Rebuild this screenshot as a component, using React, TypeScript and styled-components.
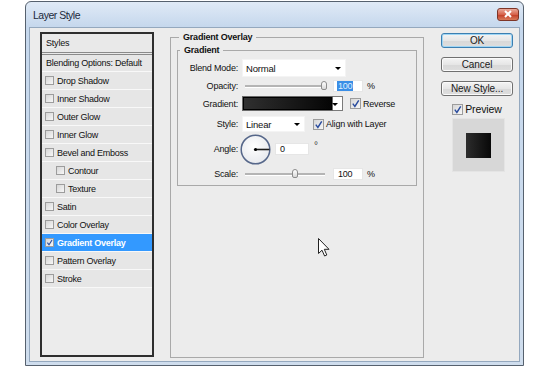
import React from "react";
import styled, { createGlobalStyle } from "styled-components";

interface IStyleItem {
  label: string;
  nested?: boolean;
  checked?: boolean;
  selected?: boolean;
}

const styleItems: IStyleItem[] = [
  { label: "Drop Shadow" },
  { label: "Inner Shadow" },
  { label: "Outer Glow" },
  { label: "Inner Glow" },
  { label: "Bevel and Emboss" },
  { label: "Contour", nested: true },
  { label: "Texture", nested: true },
  { label: "Satin" },
  { label: "Color Overlay" },
  { label: "Gradient Overlay", checked: true, selected: true },
  { label: "Pattern Overlay" },
  { label: "Stroke" },
];

function Check({ checked, size = 9 }: { checked?: boolean; size?: number }) {
  return (
    <Box $size={size}>
      {checked && (
        <svg width={size} height={size} viewBox="0 0 10 10">
          <path d="M2 5.2 L4.3 8.2 L8.6 1.4" fill="none" stroke="#2a4c9e" strokeWidth="1.6" />
        </svg>
      )}
    </Box>
  );
}

function App() {
  return (
    <>
      <GlobalStyle />
      <Window>
        <TitleBar>
          <Title>Layer Style</Title>
          <CloseBtn>
            <svg width="10" height="8" viewBox="0 0 10 8">
              <path d="M2 1 L8 7 M8 1 L2 7" stroke="#fff" strokeWidth="2" />
            </svg>
          </CloseBtn>
        </TitleBar>
        <Body>
          <StylesPanel>
            <PanelHead>Styles</PanelHead>
            <BlendRow>Blending Options: Default</BlendRow>
            {styleItems.map((item) => (
              <StyleRow key={item.label} $nested={item.nested} $selected={item.selected}>
                <Check checked={item.checked} />
                {item.label}
              </StyleRow>
            ))}
          </StylesPanel>

          <Group>
            <Legend>Gradient Overlay</Legend>
            <InnerGroup>
              <Legend>Gradient</Legend>
              <Row $h={18}>
                <Label>Blend Mode:</Label>
                <Select $w={104} $h={18}>
                  Normal
                  <Arrow />
                </Select>
              </Row>
              <Row $h={16} $mt={1}>
                <Label>Opacity:</Label>
                <Slider>
                  <Thumb style={{ left: "79px" }} />
                </Slider>
                <NumInput>
                  <Selected>100</Selected>
                </NumInput>
                <Unit>%</Unit>
              </Row>
              <Row $h={17} $mt={1}>
                <Label>Gradient:</Label>
                <Swatch />
                <SwatchDrop>
                  <Arrow />
                </SwatchDrop>
                <Option $ml={7}>
                  <Check checked size={11} />
                  Reverse
                </Option>
              </Row>
              <Row $h={18} $mt={3}>
                <Label>Style:</Label>
                <Select $w={63} $h={16}>
                  Linear
                  <Arrow />
                </Select>
                <Option $ml={8}>
                  <Check checked size={11} />
                  Align with Layer
                </Option>
              </Row>
              <Row $h={30} $mt={1}>
                <Label>Angle:</Label>
                <Dial width="31" height="31" viewBox="0 0 31 31">
                  <defs>
                    <radialGradient id="dialFill" cx="0.45" cy="0.4" r="0.6">
                      <stop offset="0" stopColor="#ffffff" />
                      <stop offset="1" stopColor="#e8eaee" />
                    </radialGradient>
                  </defs>
                  <circle cx="15.5" cy="15.5" r="14.3" fill="url(#dialFill)" stroke="#56678a" strokeWidth="1.5" />
                  <line x1="15.5" y1="15.5" x2="29.5" y2="15.5" stroke="#1c1c1c" strokeWidth="1.6" />
                  <circle cx="15.5" cy="15.5" r="1.6" fill="#000" />
                </Dial>
                <NumInput $w={34} $ml={4}>0</NumInput>
                <Degree>°</Degree>
              </Row>
              <Row $h={16} $mt={2}>
                <Label>Scale:</Label>
                <Slider>
                  <Thumb style={{ left: "50px" }} />
                </Slider>
                <NumInput>100</NumInput>
                <Unit>%</Unit>
              </Row>
            </InnerGroup>
          </Group>

          <Actions>
            <Button $primary>OK</Button>
            <Button>Cancel</Button>
            <Button>New Style...</Button>
            <PreviewToggle>
              <Check checked size={11} />
              Preview
            </PreviewToggle>
            <PreviewBox>
              <PreviewSquare />
            </PreviewBox>
          </Actions>

          <Cursor width="12" height="19" viewBox="0 0 12 19">
            <path
              d="M0.5 0.5 L0.5 15.5 L4 12.2 L6.6 18 L8.8 17 L6.3 11.3 L11 11.3 Z"
              fill="#fff"
              stroke="#222"
              strokeWidth="1"
              strokeLinejoin="round"
            />
          </Cursor>
        </Body>
      </Window>
    </>
  );
}

export default App;

const GlobalStyle = createGlobalStyle`
  html, body {
    margin: 0;
    padding: 0;
    background: #ffffff;
  }
  body {
    font-family: "Liberation Sans", Arial, sans-serif;
    color: #111;
  }
`;

const Window = styled.div`
  box-sizing: border-box;
  margin: 1px 0 0 25px;
  width: 499px;
  height: 365px;
  border: 1px solid #56616e;
  border-radius: 6px 6px 0 0;
  padding: 0 3px 3px;
  background: linear-gradient(#e0eaf6, #c6d8ed 24px, #cfdded);
  display: flex;
  flex-direction: column;
`;

const TitleBar = styled.div`
  height: 25px;
  display: flex;
  align-items: center;
  justify-content: space-between;
  padding: 0 1px 0 4px;
`;

const Title = styled.span`
  font-size: 10.5px;
  letter-spacing: -0.5px;
  color: #1b2a3c;
`;

const CloseBtn = styled.span`
  box-sizing: border-box;
  width: 22px;
  height: 13px;
  margin-top: -1px;
  border: 1px solid #7e3527;
  border-radius: 3px;
  background: linear-gradient(#eaa99a, #d7624b 50%, #c4402a 55%, #d87a5a);
  display: flex;
  align-items: center;
  justify-content: center;
`;

const Body = styled.div`
  position: relative;
  flex: 1;
  display: flex;
  align-items: flex-start;
  padding: 4px 0 0 10px;
  background: #ececec;
  border: 1px solid #94a8be;
  font-size: 9px;
  letter-spacing: -0.2px;
`;

const StylesPanel = styled.div`
  box-sizing: border-box;
  width: 114px;
  height: 325px;
  border: 2px solid #2e2e2e;
  background: #ececec;
  display: flex;
  flex-direction: column;
`;

const PanelHead = styled.div`
  height: 18px;
  display: flex;
  align-items: center;
  padding-left: 4px;
  background: #e9e9e9;
  border-bottom: 3px double #8a8a8a;
`;

const BlendRow = styled.div`
  height: 16px;
  display: flex;
  align-items: center;
  padding-left: 4px;
  background: #e6e6e6;
  border-bottom: 1px solid #f8f8f8;
  letter-spacing: -0.25px;
`;

const StyleRow = styled.div<{ $nested?: boolean; $selected?: boolean }>`
  height: 17px;
  display: flex;
  align-items: center;
  gap: 3px;
  padding-left: ${(props) => (props.$nested ? "14px" : "3px")};
  background: ${(props) => (props.$selected ? "#3399ff" : "#e6e6e6")};
  color: ${(props) => (props.$selected ? "#ffffff" : "#111")};
  font-weight: ${(props) => (props.$selected ? 700 : 400)};
  border-bottom: 1px solid #f8f8f8;
  letter-spacing: -0.25px;
`;

const Box = styled.span<{ $size: number }>`
  box-sizing: border-box;
  flex: none;
  width: ${(props) => props.$size}px;
  height: ${(props) => props.$size}px;
  border: 1px solid #9c9c9c;
  background: linear-gradient(135deg, #d6d6d6, #f7f7f7);
  display: flex;
  align-items: center;
  justify-content: center;
  svg {
    display: block;
  }
`;

const Group = styled.fieldset`
  box-sizing: border-box;
  margin: 0 0 0 16px;
  width: 254px;
  height: 326px;
  padding: 0 6px;
  border: 1px solid #a9a9a9;
  min-width: 0;
`;

const Legend = styled.legend`
  padding: 0 4px;
  margin-left: 2px;
  font-weight: 700;
  line-height: 11px;
  color: #111;
`;

const InnerGroup = styled.fieldset`
  box-sizing: border-box;
  margin: 2px 0 0;
  padding: 3px 0 3px;
  border: 1px solid #a9a9a9;
  min-width: 0;
`;

const Row = styled.div<{ $h: number; $mt?: number }>`
  height: ${(props) => props.$h}px;
  margin-top: ${(props) => props.$mt || 0}px;
  display: flex;
  align-items: center;
`;

const Label = styled.span`
  width: 60px;
  margin-right: 4px;
  text-align: right;
  flex: none;
`;

const Select = styled.div<{ $w: number; $h: number }>`
  box-sizing: border-box;
  position: relative;
  width: ${(props) => props.$w}px;
  height: ${(props) => props.$h}px;
  padding-left: 3px;
  display: flex;
  align-items: center;
  background: #ffffff;
  border: 1px solid #f4f4f4;
  font-size: 9.5px;
`;

const Arrow = styled.span`
  position: absolute;
  right: 4px;
  top: 50%;
  margin-top: -1px;
  border-top: 3px solid #000;
  border-left: 3px solid transparent;
  border-right: 3px solid transparent;
`;

const Slider = styled.div`
  position: relative;
  width: 80px;
  height: 2px;
  margin: 0 8px 0 3px;
  background: #b4b4b4;
  border-bottom: 1px solid #fff;
`;

const Thumb = styled.span`
  position: absolute;
  top: -4px;
  width: 6px;
  height: 9px;
  margin-left: -3px;
  box-sizing: border-box;
  border: 1px solid #8c8c8c;
  border-radius: 3px 3px 2px 2px;
  background: linear-gradient(#ffffff, #d8d8d8);
`;

const NumInput = styled.div<{ $w?: number; $ml?: number }>`
  box-sizing: border-box;
  width: ${(props) => props.$w || 30}px;
  height: 12px;
  margin-left: ${(props) => props.$ml || 0}px;
  padding-left: 4px;
  display: flex;
  align-items: center;
  background: #ffffff;
  border: 1px solid #e6e6e6;
`;

const Selected = styled.span`
  margin-left: -1px;
  padding: 0 1px;
  line-height: 10px;
  background: #3a8ee6;
  color: #dfefff;
`;

const Unit = styled.span`
  margin-left: 4px;
`;

const Swatch = styled.div`
  box-sizing: border-box;
  width: 91px;
  height: 15px;
  border: 1px solid #6a6a6a;
  box-shadow: inset 0 0 0 1px #000;
  background: linear-gradient(to right, #303030, #050505);
`;

const SwatchDrop = styled.div`
  box-sizing: border-box;
  position: relative;
  width: 10px;
  height: 15px;
  background: #ffffff;
  border: 1px solid #7a7a7a;
  border-left: none;
`;

const Option = styled.span<{ $ml: number }>`
  display: flex;
  align-items: center;
  gap: 2px;
  margin-left: ${(props) => props.$ml}px;
`;

const Dial = styled.svg`
  display: block;
  margin-left: -2px;
`;

const Degree = styled.span`
  align-self: flex-start;
  margin: 6px 0 0 5px;
  color: #444;
  font-size: 10px;
`;

const Actions = styled.div`
  margin: 1px 0 0 17px;
  width: 72px;
  display: flex;
  flex-direction: column;
  align-items: center;
  gap: 9px;
  font-size: 10px;
  letter-spacing: -0.1px;
`;

const Button = styled.div<{ $primary?: boolean }>`
  box-sizing: border-box;
  width: 72px;
  height: 15px;
  display: flex;
  align-items: center;
  justify-content: center;
  border: 1px solid ${(props) => (props.$primary ? "#3c7fb1" : "#707070")};
  border-radius: 3px;
  background: linear-gradient(#f4f4f4, #e6e6e6 50%, #d8d8d8 51%, #dedede);
  box-shadow: ${(props) => (props.$primary ? "inset 0 0 0 1px #9fd6f5" : "inset 0 0 0 1px #fafafa")};
  color: #1a1a1a;
`;

const PreviewToggle = styled.div`
  display: flex;
  align-items: center;
  gap: 2px;
  margin-top: -2px;
  font-size: 10.5px;
`;

const PreviewBox = styled.div`
  box-sizing: border-box;
  width: 53px;
  height: 54px;
  margin: -6px 0 0 2px;
  display: flex;
  align-items: center;
  justify-content: center;
  background: #d7d7d7;
  border: 1px solid #e4e4e4;
`;

const PreviewSquare = styled.div`
  width: 25px;
  height: 25px;
  background: linear-gradient(to right, #2c2c2c, #080808);
`;

const Cursor = styled.svg`
  position: absolute;
  left: 288px;
  top: 210px;
`;
